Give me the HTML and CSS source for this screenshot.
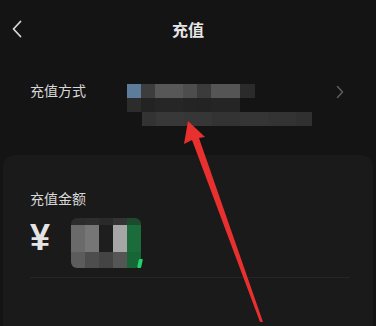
FILE: index.html
```html
<!DOCTYPE html>
<html lang="zh">
<head>
<meta charset="utf-8">
<link rel="stylesheet" href="styles.css">
</head>
<body>
<div class="page">
  <header class="topbar">
    <span class="back">
      <svg width="12" height="18" viewBox="0 0 12 18"><path d="M9.5 1.5 L2.5 9 L9.5 16.5" fill="none" stroke="#d6d6d6" stroke-width="1.8" stroke-linecap="round" stroke-linejoin="round"/></svg>
    </span>
    <h1 class="title">充值</h1>
    <span></span>
  </header>

  <section class="method">
    <div class="label">充值方式</div>
    <div class="mosaic">
      <div class="mrow">
        <i class="c14" style="background:#5d7c9c"></i><i class="c14" style="background:#3d3d3d"></i><i class="c28" style="background:#575757"></i><i class="c14" style="background:#4d4d4d"></i><i class="c14" style="background:#3b3b3b"></i><i class="c29" style="background:#555555"></i><i class="c15" style="background:#2b2b2b"></i>
      </div>
      <div class="mrow">
        <i class="c14" style="background:#2c2c2c"></i><i class="c14" style="background:#232323"></i><i class="c28" style="background:#262626"></i><i class="c14" style="background:#242424"></i><i class="c14" style="background:#232323"></i><i class="c29" style="background:#252525"></i>
      </div>
      <div class="mrow indent">
        <i class="c14" style="background:#333333"></i><i class="c28" style="background:#383838"></i><i class="c28" style="background:#363636"></i><i class="c28" style="background:#333333"></i><i class="c28" style="background:#353535"></i><i class="c28" style="background:#333333"></i><i class="c16" style="background:#303030"></i>
      </div>
    </div>
    <span class="chev">
      <svg width="8" height="14" viewBox="0 0 8 14"><path d="M1.5 1.5 L6.5 7 L1.5 12.5" fill="none" stroke="#5e5e5e" stroke-width="1.5" stroke-linecap="round" stroke-linejoin="round"/></svg>
    </span>
  </section>

  <section class="card">
    <div class="label">充值金额</div>
    <div class="amount">
      <span class="yen">¥</span>
      <div class="numblur">
        <i style="background:#2c2c2c"></i><i style="background:#2e2e2e"></i><i style="background:#2a2a2a"></i><i style="background:#333333"></i><i style="background:#1d4a2e"></i>
        <i style="background:#6a6a6a"></i><i style="background:#767676"></i><i style="background:#1e1e1e"></i><i style="background:#a6a6a6"></i><i style="background:#1c6b3b"></i>
        <i style="background:#5c5c5c"></i><i style="background:#4d4d4d"></i><i style="background:#444444"></i><i style="background:#555555"></i><i style="background:#176636"></i>
      </div>
      <span class="tick"></span>
    </div>
    <div class="divider"></div>
  </section>

  <svg class="arrow" width="376" height="326" viewBox="0 0 376 326">
    <polygon points="188,121 205,137 199,138 263,322 260,322 192,140 184,144" fill="#e8302e"/>
  </svg>
</div>
</body>
</html>
```

FILE: styles.css
```css
* { box-sizing: border-box; margin: 0; padding: 0; }
html, body { width: 376px; height: 326px; overflow: hidden; background: #141414; }
body { font-family: "Noto Sans CJK SC", "Liberation Sans", sans-serif; color: #dcdcdc; }
.page { position: relative; width: 376px; height: 326px; }

.topbar {
  height: 58px;
  display: grid;
  grid-template-columns: 1fr auto 1fr;
  align-items: center;
}
.back { padding-left: 11px; display: flex; align-items: center; }
.title { font-size: 16px; font-weight: 700; color: #e6e6e6; line-height: 20px; }

.method {
  display: flex;
  align-items: flex-start;
  padding: 26px 32px 0 30px;
  height: 97px;
}
.label { font-size: 14px; line-height: 16px; color: #d8d8d8; width: 97px; flex: none; }
.method .label { margin-top: -2px; }
.mosaic { display: flex; flex-direction: column; flex: 1; }
.mrow { display: flex; height: 14px; }
.mrow.indent { padding-left: 15px; }
.mrow i { display: block; height: 14px; }
.c14 { width: 14px; } .c15 { width: 15px; } .c16 { width: 16px; } .c28 { width: 28px; } .c29 { width: 29px; }
.chev { margin-top: 1px; display: flex; }

.card {
  margin: 0 3px;
  height: 171px;
  background: #1a1a1a;
  border-radius: 12px 12px 0 0;
  padding: 33px 23px 0 27px;
}
.card .label { line-height: 20px; }
.amount { display: flex; align-items: flex-start; margin-top: 10px; position: relative; }
.yen {
  font-family: "Liberation Sans", sans-serif;
  font-weight: 700; font-size: 36px; line-height: 36px;
  color: #e4e4e4; margin-top: 2px; width: 41px;
}
.numblur {
  width: 70px; height: 50px;
  display: grid;
  grid-template-columns: repeat(5, 14px);
  grid-template-rows: 7px 27px 16px;
  border-radius: 6px;
  overflow: hidden;
}
.numblur i { display: block; }
.tick {
  position: absolute; left: 108px; top: 41px;
  width: 4px; height: 9px; background: #21d16a;
  transform: skewX(-12deg); border-radius: 1px;
}
.divider { height: 1px; background: #252525; margin-top: 9px; }

.arrow { position: absolute; left: 0; top: 0; pointer-events: none; }
```
